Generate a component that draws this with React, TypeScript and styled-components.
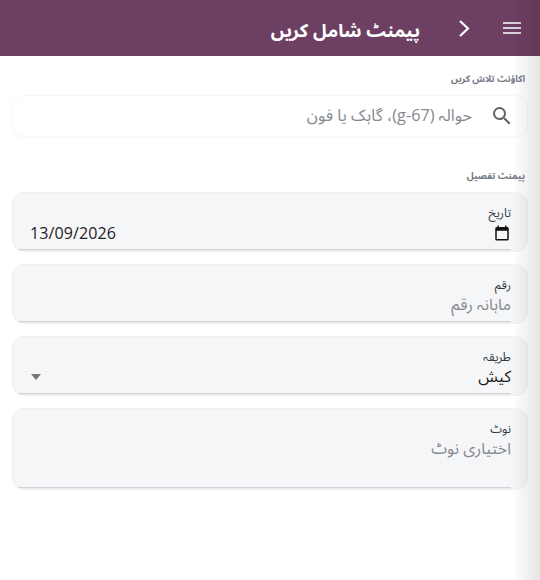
import React from 'react';
import styled, { createGlobalStyle } from 'styled-components';

const GlobalStyle = createGlobalStyle`
  html, body {
    margin: 0;
    padding: 0;
    background: #fff;
    overflow: hidden;
  }
  * {
    box-sizing: border-box;
  }
`;

const Page = styled.div`
  position: relative;
  width: 540px;
  height: 580px;
  overflow: hidden;
  background: #fff;
  font-family: 'Open Sans', 'Noto Sans Arabic', sans-serif;
`;

const EdgeShadow = styled.div`
  position: absolute;
  top: 0;
  right: 0;
  bottom: 0;
  width: 28px;
  pointer-events: none;
  background: linear-gradient(to right, rgba(0, 0, 0, 0), rgba(0, 0, 0, 0.1));
`;

const Header = styled.header`
  height: 56px;
  background: #6d3f62;
  display: flex;
  align-items: center;
  padding: 0 18px 0 0;
  color: #fff;
`;

const HeaderIcon = styled.button<{ $gap: number }>`
  display: flex;
  align-items: center;
  justify-content: center;
  padding: 0;
  border: 0;
  margin-left: ${(p) => p.$gap}px;
  background: none;
  color: #fff;
`;

const Title = styled.h1`
  margin: 4px 0 0;
  font-size: 18.4px;
  font-weight: 700;
  line-height: 28px;
`;

const Content = styled.main`
  padding: 16px 12px 0;
`;

const SectionLabel = styled.div`
  font-size: 9.3px;
  font-weight: 700;
  color: #747884;
  line-height: 14px;
  padding-right: 3px;
  margin-bottom: 9px;
`;

const SearchBox = styled.div`
  height: 42px;
  display: flex;
  align-items: center;
  gap: 18px;
  padding: 0 13px;
  margin-bottom: 32px;
  border: 1px solid #f8f8f9;
  border-radius: 12px;
  background: #fff;
  box-shadow: 0 1px 2px rgba(0, 0, 0, 0.02);
`;

const SearchText = styled.span`
  font-size: 16.3px;
  color: #85888e;
`;

const Fields = styled.div`
  display: flex;
  flex-direction: column;
  gap: 12px;
`;

const Field = styled.div<{ $height: number }>`
  position: relative;
  height: ${(p) => p.$height}px;
  padding: 12px 16px 0;
  border: 1px solid #eff0f2;
  border-radius: 12px;
  background: #f5f6f8;
  overflow: hidden;

  &::after {
    content: '';
    position: absolute;
    left: 0;
    right: 16px;
    bottom: 0;
    height: 2px;
    background: linear-gradient(#d3d4d7 50%, #e8e9eb 50%);
  }
`;

const FieldLabel = styled.div`
  font-size: 12px;
  line-height: 16px;
  color: #33363b;
`;

const FieldRow = styled.div`
  display: flex;
  align-items: center;
  justify-content: space-between;
  height: 24px;
`;

const FieldValue = styled.span`
  font-size: 16px;
  color: #1f2023;
`;

const DateValue = styled(FieldValue)`
  margin-left: 1px;
  letter-spacing: 0.1px;
`;

const Placeholder = styled.span`
  font-size: 16px;
  color: #85888e;
`;

const Arrow = styled.span`
  width: 0;
  height: 0;
  margin-left: 2px;
  border-left: 5px solid transparent;
  border-right: 5px solid transparent;
  border-top: 6px solid #757575;
`;

export default function App() {
  return (
    <Page dir="rtl">
      <GlobalStyle />
      <Header>
        <HeaderIcon $gap={32}>
          <svg width="20" height="14" viewBox="0 0 20 14" fill="none" stroke="currentColor" strokeWidth="1.6">
            <path d="M1 2h18M1 7h18M1 12h18" />
          </svg>
        </HeaderIcon>
        <HeaderIcon $gap={38}>
          <svg width="12" height="19" viewBox="0 0 12 19" fill="none" stroke="currentColor" strokeWidth="2.2">
            <path d="M2 2l8 7.5L2 17" />
          </svg>
        </HeaderIcon>
        <Title>پیمنٹ شامل کریں</Title>
      </Header>
      <Content>
        <SectionLabel>اکاؤنٹ تلاش کریں</SectionLabel>
        <SearchBox>
          <svg width="24" height="24" viewBox="0 0 24 24" fill="#5f6368">
            <path d="M15.5 14h-.79l-.28-.27A6.471 6.471 0 0 0 16 9.5 6.5 6.5 0 1 0 9.5 16c1.61 0 3.09-.59 4.23-1.57l.27.28v.79l5 4.99L20.49 19l-4.99-5zm-6 0C7.01 14 5 11.99 5 9.5S7.01 5 9.5 5 14 7.01 14 9.5 11.99 14 9.5 14z" />
          </svg>
          <SearchText>حوالہ (g-67)، گاہک یا فون</SearchText>
        </SearchBox>
        <SectionLabel>پیمنٹ تفصیل</SectionLabel>
        <Fields>
          <Field $height={60}>
            <FieldLabel>تاریخ</FieldLabel>
            <FieldRow>
              <svg width="18" height="18" viewBox="0 0 24 24" fill="#111">
                <path d="M19 4h-1V2h-2v2H8V2H6v2H5a2 2 0 0 0-2 2v14a2 2 0 0 0 2 2h14a2 2 0 0 0 2-2V6a2 2 0 0 0-2-2zm0 16H5V9h14v11z" />
              </svg>
              <DateValue dir="ltr">13/09/2026</DateValue>
            </FieldRow>
          </Field>
          <Field $height={60}>
            <FieldLabel>رقم</FieldLabel>
            <FieldRow>
              <Placeholder>ماہانہ رقم</Placeholder>
            </FieldRow>
          </Field>
          <Field $height={60}>
            <FieldLabel>طریقہ</FieldLabel>
            <FieldRow>
              <FieldValue>کیش</FieldValue>
              <Arrow />
            </FieldRow>
          </Field>
          <Field $height={82}>
            <FieldLabel>نوٹ</FieldLabel>
            <FieldRow>
              <Placeholder>اختیاری نوٹ</Placeholder>
            </FieldRow>
          </Field>
        </Fields>
      </Content>
      <EdgeShadow />
    </Page>
  );
}
